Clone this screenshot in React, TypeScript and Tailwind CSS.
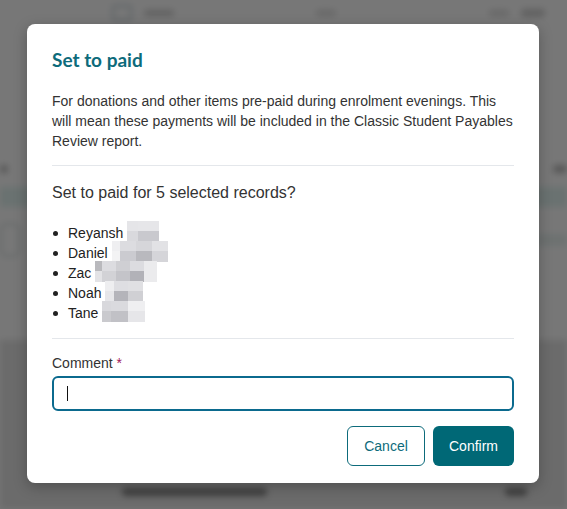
import React from "react";

type Blur = { widths: number[]; top: string[]; bottom: string[] };

const students: { name: string; blur: Blur }[] = [
	{
		name: "Reyansh",
		blur: { widths: [11, 21], top: ["#e5e5e8", "#e6e6e9"], bottom: ["#d9d9dd", "#c9c9ce"] },
	},
	{
		name: "Daniel",
		blur: {
			widths: [8, 16, 16, 16],
			top: ["#efeff1", "#dcdce0", "#d6d6da", "#e2e2e5"],
			bottom: ["#f3f3f4", "#cbcbd0", "#b9b9be", "#d5d5d9"],
		},
	},
	{
		name: "Zac",
		blur: {
			widths: [7, 14, 14, 14, 13],
			top: ["#b9b9bd", "#dcdce0", "#cfcfd3", "#dcdce0", "#ebebed"],
			bottom: ["#e3e3e6", "#d2d2d6", "#c4c4c9", "#b2b2b8", "#ebebed"],
		},
	},
	{
		name: "Noah",
		blur: {
			widths: [9, 14, 15],
			top: ["#eeeef0", "#dedee2", "#e0e0e3"],
			bottom: ["#e6e6e9", "#b4b4ba", "#d0d0d4"],
		},
	},
	{
		name: "Tane",
		blur: {
			widths: [9, 17, 17],
			top: ["#d8d8dc", "#dadade", "#efeff1"],
			bottom: ["#cacace", "#c1c1c6", "#e6e6e9"],
		},
	},
];

// pixelated surname, as in the redacted screenshot
function Redacted({ blur }: { blur: Blur }) {
	return (
		<span className="ml-[4px] mb-[3px] flex flex-col">
			<span className="flex h-[10px]">
				{blur.widths.map((w, i) => (
					<span key={i} className="h-full" style={{ width: w, background: blur.top[i] }} />
				))}
			</span>
			<span className="flex h-[11px]">
				{blur.widths.map((w, i) => (
					<span key={i} className="h-full" style={{ width: w, background: blur.bottom[i] }} />
				))}
			</span>
		</span>
	);
}

function BackgroundPage() {
	return (
		<div className="flex h-[509px] flex-col overflow-hidden bg-white blur-[3px]">
			<div className="flex h-[26px] items-center gap-3 px-[112px]">
				<div className="h-[16px] w-[20px] rounded-[3px] border-2 border-[#c4d3da]" />
				<div className="h-[6px] w-[30px] rounded bg-[#cfcfcf]" />
				<div className="ml-[130px] h-[6px] w-[20px] rounded bg-[#dddddd]" />
				<div className="ml-auto h-[6px] w-[20px] rounded bg-[#dddddd]" />
				<div className="mr-[-90px] h-[8px] w-[24px] rounded bg-[#d0d0d0]" />
			</div>
			<div className="h-[124px]" />
			<div className="flex h-[37px] items-center justify-between">
				<div className="h-[8px] w-[8px] rounded-full bg-[#bbb]" />
				<div className="h-[8px] w-[14px] rounded-full bg-[#bbb]" />
			</div>
			<div className="h-[20px] bg-[#e3f4f2]" />
			<div className="h-[13px]" />
			<div className="flex h-[40px] items-center">
				<div className="h-[34px] w-[20px] rounded-[6px] border-2 border-[#d5dede]" />
				<div className="ml-auto h-[12px] w-[30px] bg-[#eaf3f2]" />
			</div>
			<div className="h-[80px]" />
			<div className="flex flex-1 flex-col bg-[#e5e5e5]">
				<div className="h-[148px]" />
				<div className="flex items-center px-[122px]">
					<div className="h-[8px] w-[145px] rounded bg-[#888]" />
					<div className="ml-auto mr-[-82px] h-[8px] w-[22px] rounded bg-[#888]" />
				</div>
			</div>
		</div>
	);
}

export default function App() {
	return (
		<div className="relative h-[509px] w-[567px] overflow-hidden font-['Liberation_Sans'] text-[#333]">
			<BackgroundPage />

			{/* Overlay + dialog */}
			<div className="absolute inset-0 flex bg-black/[0.535] pt-[24px] pl-[27px]">
				<div
					role="dialog"
					className="h-[459px] w-[512px] rounded-[8px] bg-white px-[25px] pt-[24px] pb-[17px] shadow-[0_4px_14px_rgba(0,0,0,0.25)]"
				>
					<h2 className="font-['Lato'] text-[19px] leading-[24px] font-bold text-[#0d6b7b]">
						Set to paid
					</h2>
					<p className="mt-[19px] text-[14px] leading-[20px] text-[#333]">
						For donations and other items pre-paid during enrolment evenings. This will mean these
						payments will be included in the Classic Student Payables Review report.
					</p>

					<div className="mt-[14px] h-px bg-[#e4e7eb]" />

					<p className="mt-[15px] text-[16px] leading-[24px] text-[#333]">
						Set to paid for 5 selected records?
					</p>
					<ul className="mt-[18px]">
						{students.map((s) => (
							<li key={s.name} className="flex h-[20px] items-center text-[14px] leading-[20px] text-[#222]">
								<span className="flex w-[16px]">
									<span className="ml-[1px] h-[5px] w-[5px] rounded-full bg-[#222]" />
								</span>
								{s.name}
								<Redacted blur={s.blur} />
							</li>
						))}
					</ul>

					<div className="mt-[15px] h-px bg-[#e4e7eb]" />

					<label className="mt-[14px] block text-[14px] leading-[20px] text-[#333]">
						Comment <span className="text-[#a3195b]">*</span>
					</label>
					<div className="mt-[3px] flex h-[35px] items-center rounded-[6px] border-2 border-[#0b6a8e] pl-[13px]">
						<span className="h-[15px] w-px bg-[#111]" />
					</div>

					<div className="mt-[15px] flex justify-end gap-[8px]">
						<button className="h-[40px] w-[78px] rounded-[6px] border border-[#0d6b7b] bg-white text-[14px] text-[#0d6b7b]">
							Cancel
						</button>
						<button className="h-[40px] w-[81px] rounded-[6px] bg-[#006876] text-[14px] text-white">
							Confirm
						</button>
					</div>
				</div>
			</div>
		</div>
	);
}
